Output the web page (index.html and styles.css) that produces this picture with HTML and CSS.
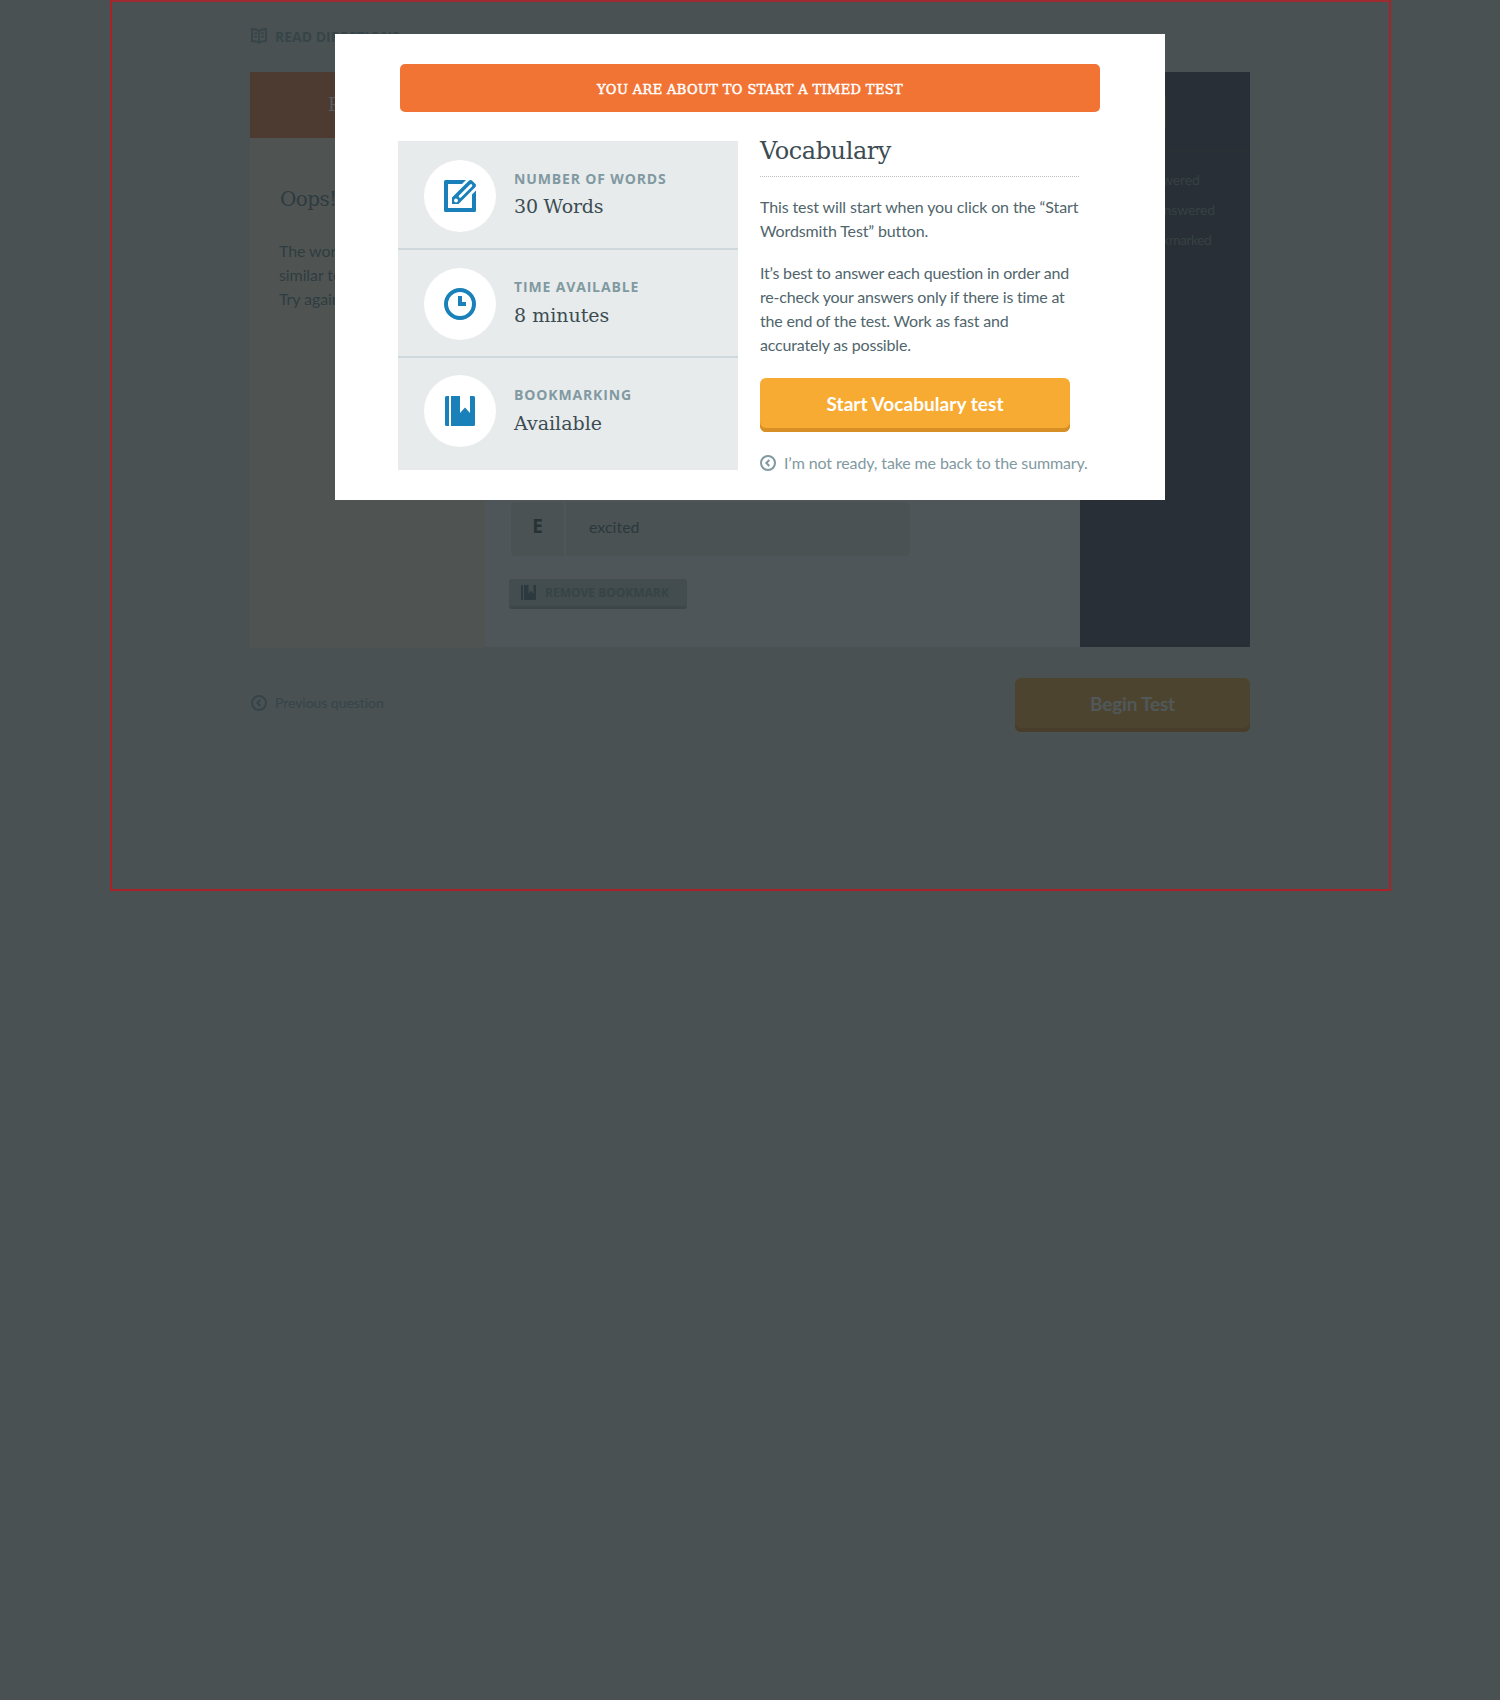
FILE: index.html
```html
<!DOCTYPE html>
<html lang="en">
<head>
<meta charset="utf-8">
<title>Vocabulary test</title>
<link rel="stylesheet" href="styles.css">
</head>
<body>
<svg class="defs" aria-hidden="true">
  <symbol id="back" viewBox="0 0 16 16"><circle cx="8" cy="8" r="7" fill="none" stroke="currentColor" stroke-width="2"/><path d="M9.300 5 6.300 8l3 3" fill="none" stroke="currentColor" stroke-width="2"/></symbol>
  <symbol id="bookmark" viewBox="0 0 30 30"><path fill="currentColor" d="M1.500 0H4v30H1.500Q0 30 0 28.500V1.500Q0 0 1.500 0ZM6 0h9v17l5-5.500 5 5.500V0h3.500Q30 0 30 1.500v27q0 1.500-1.500 1.500H6Z"/></symbol>
</svg>
<div class="frame">
  <main class="page">
    <a class="directions">
      <svg width="16" height="16" viewBox="0 0 16 16" fill="none" stroke="currentColor"><path stroke-width="2" d="M8 3Q5 1 1 1v12q4 0 7 1.500 3-1.500 7-1.500V1q-4 0-7 2Z"/><path stroke-width="1.500" d="M8 3v11M3 5l3 .6M3 8.300l3 .6M13 5l-3 .6M13 8.300l-3 .6"/></svg>
      <span>READ DIRECTIONS</span>
    </a>
    <div class="panel">
      <section class="feedback">
        <h2>Practice</h2>
        <div class="message">
          <h3>Oops!</h3>
          <p>The word<br>similar to<br>Try again</p>
        </div>
      </section>
      <section class="question">
        <div class="answer"><b>E</b><span>excited</span></div>
        <button class="remove"><svg width="15" height="15"><use href="#bookmark"/></svg>REMOVE BOOKMARK</button>
      </section>
      <aside class="status">
        <div class="counter"><i></i></div>
        <ul><li>Answered</li><li>Unanswered</li><li class="marked">Bookmarked</li></ul>
      </aside>
    </div>
    <div class="pager">
      <a class="previous"><svg width="16" height="16"><use href="#back"/></svg><span>Previous question</span></a>
      <button class="cta begin">Begin Test</button>
    </div>
  </main>
</div>

<div class="modal">
  <div class="banner">YOU ARE ABOUT TO START A TIMED TEST</div>
  <div class="columns">
    <div class="facts">
      <div class="fact">
        <div class="disc"><svg width="32" height="32" viewBox="0 0 32 32"><path fill="currentColor" d="M1.500 0H22l-4 4H4v24h24V14.500l4-4v20q0 1.500-1.500 1.500h-29Q0 32 0 30.500v-29Q0 0 1.500 0Z"/><path fill="currentColor" d="M8 24v-6.500L24.800.8q1.700-1.500 3.400 0l3 3q1.600 1.700 0 3.400L14.500 24Z"/><path d="m16 16.500 11-11" stroke="#fff" stroke-width="2.600" stroke-linecap="round"/><circle cx="12" cy="20.500" r="1.900" fill="#fff"/></svg></div>
        <dl><dt>NUMBER OF WORDS</dt><dd>30 Words</dd></dl>
      </div>
      <div class="fact">
        <div class="disc"><svg width="32" height="32" viewBox="0 0 32 32"><circle cx="16" cy="16" r="14" fill="none" stroke="currentColor" stroke-width="4"/><path fill="currentColor" d="M14 8h4v6h4v4h-8Z"/></svg></div>
        <dl><dt>TIME AVAILABLE</dt><dd>8 minutes</dd></dl>
      </div>
      <div class="fact">
        <div class="disc"><svg width="30" height="30"><use href="#bookmark"/></svg></div>
        <dl><dt>BOOKMARKING</dt><dd>Available</dd></dl>
      </div>
    </div>
    <div class="intro">
      <h1>Vocabulary</h1>
      <p class="first">This test will start when you click on the “Start<br>Wordsmith Test” button.</p>
      <p>It’s best to answer each question in order and<br>re-check your answers only if there is time at<br>the end of the test. Work as fast and<br>accurately as possible.</p>
      <button class="cta start">Start Vocabulary test</button>
      <a class="cancel"><svg width="16" height="16"><use href="#back"/></svg><span>I’m not ready, take me back to the summary.</span></a>
    </div>
  </div>
</div>
</body>
</html>
```
FILE: styles.css
```css
* { box-sizing: border-box; }
body {
  position: relative;
  margin: 0;
  min-height: 1700px;
  background: #495153;
  font: 16px/24px Lato, sans-serif;
}
h1, h2, h3, p, dl, dd, ul { margin: 0; padding: 0; font-weight: 400; }
h1, h2, h3, dd, .banner { font-family: "DejaVu Serif", serif; }
button { border: 0; padding: 0; }
svg { display: block; flex: none; }
.defs { position: absolute; width: 0; height: 0; }

.frame {
  width: 1281px;
  height: 891px;
  margin-left: 110px;
  border: 2px solid #a82227;
  border-top-color: #9d2b2f;
}
.page { width: 1000px; margin-left: 138px; }

.directions {
  display: flex;
  align-items: center;
  gap: 8px;
  height: 70px;
  padding-left: 1px;
  color: #374548;
  font: 700 14px/20px "Open Sans", sans-serif;
}
.directions svg { margin-top: -3px; }

.panel { display: flex; height: 576px; }
.feedback { width: 235px; background: #4f5453; }
.feedback h2 {
  height: 66px;
  background: #4d3a31;
  color: #545c5e;
  font-size: 19px;
  line-height: 65px;
  text-align: center;
}
.message { padding: 47px 0 0 30px; white-space: nowrap; }
.message h3 { color: #2e3b40; font-size: 20px; line-height: 28px; letter-spacing: -0.6px; }
.message p { margin: 26px 0 0 -1px; color: #2f3c40; letter-spacing: -0.1px; }

.question {
  display: flex;
  flex-direction: column;
  justify-content: flex-end;
  align-items: flex-start;
  width: 595px;
  height: 575px;
  padding: 0 0 38px 24px;
  background: #4e5659;
}
.answer { display: flex; gap: 2px; height: 54px; margin: 0 0 23px 2px; line-height: 49px; }
.answer b, .answer span { background: #4a5254; }
.answer b {
  width: 53px;
  border-radius: 5px 0 0 5px;
  color: #263336;
  font: 700 19px/48px "Open Sans", sans-serif;
  text-align: center;
}
.answer span { width: 344px; padding-left: 23px; border-radius: 0 5px 5px 0; color: #2c393c; }
.remove {
  display: flex;
  align-items: center;
  gap: 9px;
  width: 178px;
  height: 30px;
  padding: 0 0 0 12px;
  border-bottom: 3px solid #3d4749;
  border-radius: 3px;
  background: #434c4e;
  color: #364448;
  font: 700 12px/20px "Open Sans", sans-serif;
}
.remove svg { color: #2c3a3f; }

.status { width: 170px; height: 575px; background: #282f36; }
.counter { height: 79px; padding: 24px 0 0 30px; border-bottom: 1px solid #2a3234; }
.counter i { display: block; width: 56px; height: 32px; background: #3b372f; }
.status ul { padding: 14px 0 0 59px; list-style: none; color: #364243; font-size: 14px; line-height: 30px; }
.status li { letter-spacing: -0.1px; }
.status .marked { letter-spacing: -0.5px; }

.pager { display: flex; justify-content: space-between; padding-top: 30px; }
.previous { display: flex; gap: 8px; align-items: center; height: 50px; padding-left: 1px; color: #36444a; font-size: 14px; letter-spacing: -0.05px; }

.cta {
  height: 54px;
  border-radius: 6px;
  font: 700 19px/50px Lato, sans-serif;
  text-align: center;
  padding-bottom: 2px;
}
.begin { width: 235px; background: #4d442f; box-shadow: inset 0 -4px #483e2b; color: #50585a; letter-spacing: -0.2px; }
.start { display: block; width: 310px; margin-top: 21px; background: #f8ab33; box-shadow: inset 0 -4px #d58f25; color: #fff; letter-spacing: 0.06px; }

.modal {
  position: absolute;
  left: 335px;
  top: 34px;
  width: 830px;
  height: 466px;
  padding: 30px 65px;
  background: #fff;
}
.banner {
  height: 48px;
  border-radius: 5px;
  background: #f27435;
  color: #fff;
  font-size: 13px;
  line-height: 51px;
  letter-spacing: 0.37px;
  text-align: center;
  -webkit-text-stroke: 0.5px #fff;
}
.columns { display: flex; gap: 22px; margin: 29px 0 0 -2px; }
.facts { width: 340px; height: 329px; background: #e7ebec; }
.fact { display: flex; gap: 18px; height: 108px; padding: 18px 0 0 26px; }
.fact + .fact { border-top: 2px solid #cfd8dc; }
.fact:first-child { height: 107px; padding-top: 19px; }
.fact:last-child { height: 114px; padding-top: 17px; }
.disc {
  display: flex;
  align-items: center;
  justify-content: center;
  width: 72px;
  height: 72px;
  border-radius: 50%;
  background: #fff;
  color: #1980b9;
}
.fact dl { padding-top: 9px; }
.fact dt { color: #8199a1; font: 700 14px/20px "Open Sans", sans-serif; letter-spacing: 0.85px; }
.fact dd { color: #3c4c52; font-size: 19px; line-height: 30px; letter-spacing: 0; margin-top: 3px; }
.fact:first-child dd { margin-top: 2px; letter-spacing: -0.2px; }
.fact:last-child dl { padding-top: 10px; }

.intro { width: 340px; color: #50656c; }
.intro h1 {
  width: 319px;
  height: 36px;
  border-bottom: 1px dotted #bdbdbd;
  color: #3c4c52;
  font-size: 24px;
  line-height: 21px;
  letter-spacing: -0.42px;
}
.intro p { margin-top: 18px; letter-spacing: -0.19px; white-space: nowrap; }
.intro .first { letter-spacing: -0.12px; }
.cancel { display: flex; gap: 8px; align-items: center; margin-top: 19px; color: #8199a1; letter-spacing: -0.12px; white-space: nowrap; }
```
